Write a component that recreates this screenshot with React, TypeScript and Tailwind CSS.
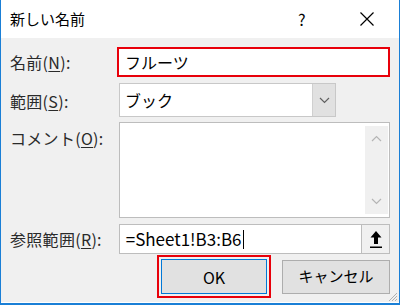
import React from "react";

const font = { fontFamily: '"Noto Sans CJK JP", "Noto Sans", sans-serif' };

function Label({ text, mnemonic }: { text: string; mnemonic: string }) {
  return (
    <span className="text-[16px] text-[#2a2a2a] leading-none tracking-[0.3px]">
      {text}(<span className="underline underline-offset-2">{mnemonic}</span>):
    </span>
  );
}

function Chevron({ up }: { up?: boolean }) {
  return (
    <svg width="11" height="7" viewBox="0 0 11 7">
      <path
        d={up ? "M1 6 L5.5 1.5 L10 6" : "M1 1 L5.5 5.5 L10 1"}
        fill="none"
        stroke={up ? "#b5b5b5" : "#606060"}
        strokeWidth="1.2"
      />
    </svg>
  );
}

export default function App() {
  return (
    <div
      className="w-[400px] h-[305px] bg-[#f0f0f0] border-x border-b-2 border-[#1a7fd6] flex flex-col relative overflow-hidden"
      style={font}
    >
      {/* title bar */}
      <div className="h-[38px] bg-white flex items-center pl-[9px] shrink-0">
        <span className="text-[15px] text-black flex-1">新しい名前</span>
        <span className="text-[16px] text-black w-[12px] mr-[49px]">?</span>
        <svg width="16" height="16" viewBox="0 0 16 16" className="mr-[24px]">
          <path d="M1.5 1.5 L14.5 14.5 M14.5 1.5 L1.5 14.5" stroke="#000" strokeWidth="1.2" />
        </svg>
      </div>

      <div className="flex flex-col pl-[9px] pr-[9px] pt-[9px] border-b border-white flex-1">
        {/* name */}
        <div className="flex items-center h-[30px]">
          <div className="w-[107px]">
            <Label text="名前" mnemonic="N" />
          </div>
          <div className="flex-1 h-[30px] border-2 border-[#e8000a] bg-white flex items-center pl-[6px] text-[16px] text-black">
            フルーツ
          </div>
        </div>

        {/* scope */}
        <div className="flex items-start mt-[6px]">
          <div className="w-[109px] pt-[6px]">
            <Label text="範囲" mnemonic="S" />
          </div>
          <div className="w-[217px] h-[34px] border border-[#c8c8c8] bg-white flex">
            <div className="flex-1 flex items-center pl-[5px] text-[16px] text-black">ブック</div>
            <div className="w-[23px] bg-[#e1e1e1] border-l border-[#d0d0d0] flex items-center justify-center">
              <Chevron />
            </div>
          </div>
        </div>

        {/* comment */}
        <div className="flex items-start mt-[5px]">
          <div className="w-[109px] pt-[4px]">
            <Label text="コメント" mnemonic="O" />
          </div>
          <div className="w-[272px] h-[96px] border border-[#bdbdbd] bg-white flex justify-end p-[3px] pr-[1px]">
            <div className="w-[23px] bg-[#f0f0f0] flex flex-col items-center justify-between py-[9px]">
              <Chevron up />
              <svg width="11" height="7" viewBox="0 0 11 7">
                <path d="M1 1 L5.5 5.5 L10 1" fill="none" stroke="#b5b5b5" strokeWidth="1.2" />
              </svg>
            </div>
          </div>
        </div>

        {/* ref */}
        <div className="flex items-center mt-[6px]">
          <div className="w-[109px]">
            <Label text="参照範囲" mnemonic="R" />
          </div>
          <div className="w-[272px] h-[30px] border border-[#bdbdbd] bg-white flex">
            <div className="flex-1 flex items-center pl-[6px] text-[17px] text-black">
              =Sheet1!B3:B6<span className="w-px h-[19px] bg-black ml-px" />
            </div>
            <div className="w-[28px] bg-[#f0f0f0] border-l border-[#bdbdbd] flex items-center justify-center">
              <svg width="14" height="20" viewBox="0 0 14 20">
                <path d="M7 2 L1.5 8.5 L5 8.5 L5 15 L9 15 L9 8.5 L12.5 8.5 Z" fill="#000" />
                <rect x="1" y="17.5" width="12" height="1.5" fill="#000" />
              </svg>
            </div>
          </div>
        </div>

        {/* buttons */}
        <div className="flex justify-end items-center mt-px">
          <div className="border-2 border-[#e8000a] p-[2px] mr-[11px]">
            <div className="w-[106px] h-[35px] bg-[#e1e1e1] border border-[#0078d7] flex items-center justify-center text-[16px] text-black">
              OK
            </div>
          </div>
          <div className="w-[108px] h-[34px] bg-[#e1e1e1] border border-[#adadad] flex items-center justify-center text-[15px] text-black">
            キャンセル
          </div>
        </div>
      </div>

      {/* resize grip */}
      <svg width="12" height="12" viewBox="0 0 12 12" className="absolute right-[1px] bottom-[1px]">
        <path d="M11 3 L3 11 M11 6 L6 11 M11 9 L9 11" stroke="#b0b0b0" strokeWidth="1" />
      </svg>
    </div>
  );
}
